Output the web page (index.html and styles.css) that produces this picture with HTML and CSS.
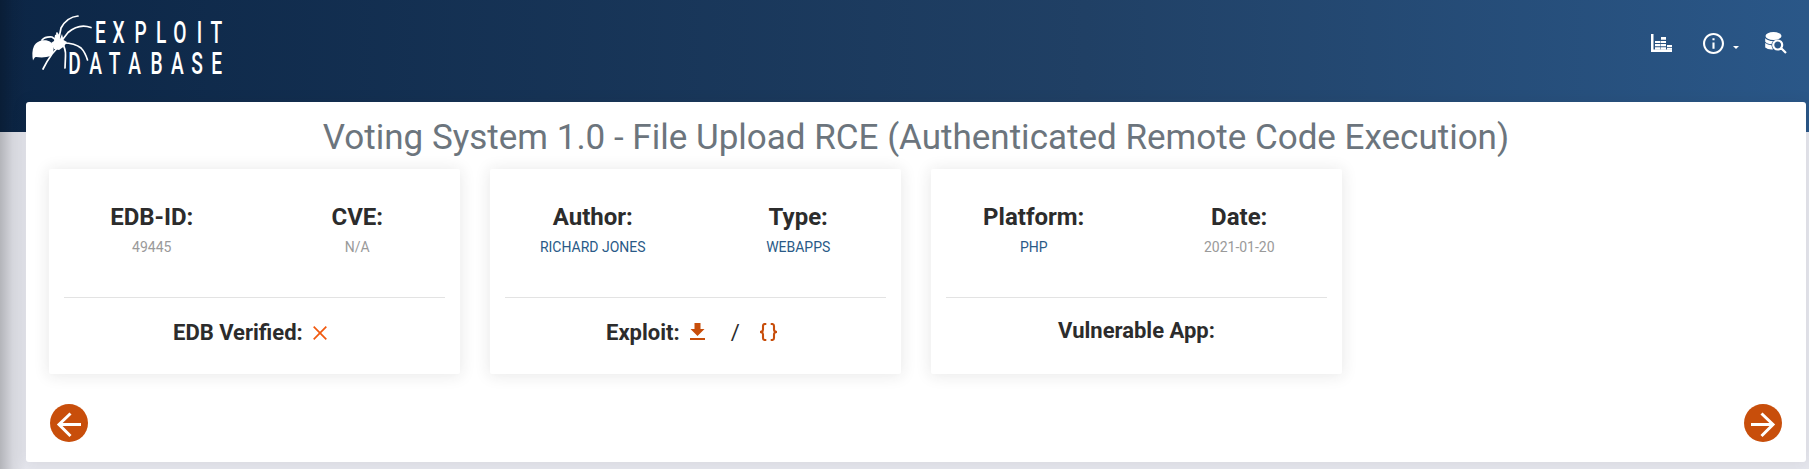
FILE: index.html
```html
<!DOCTYPE html>
<html lang="en">
<head>
<meta charset="utf-8">
<title>Voting System 1.0 - File Upload RCE</title>
<link rel="stylesheet" href="styles.css">
</head>
<body>
<header class="topbar">
  <svg class="logo" width="204" height="72" viewBox="30 14 204 72" role="img" aria-label="Exploit Database">
    <g class="spider-body">
      <path d="M33 60.500C32 56 32 50 34 46C37 40 46 38.500 50.500 42C54.500 46 54.500 52 51 55.500C46 58 40 57.500 36 57C34.500 57 34 59 33 60.500Z"/>
      <path d="M51 43L54 41L55 35L58.500 33.500L60 39L62 34L63.500 40L67 42L64 46.500L59 50L54 49Z"/>
    </g>
    <g class="spider-legs">
      <path d="M59 38L61 28Q67 17 78 16"/>
      <path d="M63 39L68 32.500Q79 23 91 27.500"/>
      <path d="M63 43Q75 43 81 48Q85 52 87.500 60"/>
      <path d="M62 43Q66 49 65.500 56L65 68"/>
      <path d="M60 45L52 54Q47 61 43 69"/>
      <path d="M42 40Q45 36.500 52 37L59 42"/>
      <path d="M57 33L59 43"/>
    </g>
    <g class="logo-text" transform="scale(.6 1)">
      <text y="43" x="167.500 197.800 234.200 268.800 299.600 332.500 360.500">EXPLOIT</text>
      <text y="74" x="124 159.500 191.200 224.500 261 295.800 328.500 361">DATABASE</text>
    </g>
  </svg>
  <nav class="actions">
    <svg class="icon-stats" width="22" height="20" viewBox="0 0 22 20">
      <path d="M0 1h2.500v15.500h18.500V19H0z"/>
      <path d="M4 8h5.500v2H4zM10 4h5v2.800h-5zM4 11h5.500v2.200H4zM10 8h5v2h-5zM10 11h5v2.200h-5zM16 12h5v2h-5zM4 14.200h5.500v2.500H4zM10 14.200h5v2.500h-5zM16 14.800h5v2h-5z"/>
    </svg>
    <svg class="icon-info" width="21" height="21" viewBox="2 2 20 20">
      <path d="M11 7h2v2h-2zm0 4h2v6h-2zm1-9C6.480 2 2 6.480 2 12s4.480 10 10 10 10-4.480 10-10S17.520 2 12 2zm0 18c-4.410 0-8-3.590-8-8s3.590-8 8-8 8 3.590 8 8-3.590 8-8 8z"/>
    </svg>
    <span class="caret"></span>
    <svg class="icon-search" width="22" height="22" viewBox="0 0 22 22">
      <ellipse cx="8.500" cy="4" rx="8" ry="4"/>
      <path d="M.2 6.200Q3 9 8 9Q6.700 10.500 6.500 12.200Q2 12 .2 9.700zM.2 11Q2.500 13 6.500 13.300Q6.700 15 8 17.500Q3 18 .2 15.500z"/>
      <path class="lens" d="M12.700 8.500a4.500 4.500 0 1 0 0 9a4.500 4.500 0 1 0 0-9zM16 16l5 5"/>
    </svg>
  </nav>
</header>
<main class="panel">
  <h1 class="title">Voting System 1.0 - File Upload RCE (Authenticated Remote Code Execution)</h1>
  <div class="cards">
    <section class="card">
      <div class="stats">
        <div class="stat"><h4>EDB-ID:</h4><p>49445</p></div>
        <div class="stat"><h4>CVE:</h4><p>N/A</p></div>
      </div>
      <div class="foot verified">
        <strong>EDB Verified:</strong>
        <svg class="cross" width="14" height="14" viewBox="0 0 14 14"><path d="M.7.7l12.600 12.600M13.300.7L.7 13.300"/></svg>
      </div>
    </section>
    <section class="card">
      <div class="stats">
        <div class="stat"><h4>Author:</h4><p><a>RICHARD JONES</a></p></div>
        <div class="stat"><h4>Type:</h4><p><a>WEBAPPS</a></p></div>
      </div>
      <div class="foot exploit">
        <strong>Exploit:</strong>
        <svg class="download" width="15" height="17" viewBox="0 0 15 17"><path d="M4.500 0h6v6H14.500l-7 7-7-7H4.500zM0 15h15v2H0z"/></svg>
        <span class="slash">/</span>
        <svg class="braces" width="19" height="18" viewBox="0 0 19 18"><path d="M7.300 1H6Q4 1 4 3V6.500Q4 9 1 9Q4 9 4 11.500V15Q4 17 6 17H7.300M11.700 1H13Q15 1 15 3V6.500Q15 9 18 9Q15 9 15 11.500V15Q15 17 13 17H11.700"/></svg>
      </div>
    </section>
    <section class="card">
      <div class="stats">
        <div class="stat"><h4>Platform:</h4><p><a>PHP</a></p></div>
        <div class="stat"><h4>Date:</h4><p>2021-01-20</p></div>
      </div>
      <div class="foot app"><strong>Vulnerable App:</strong></div>
    </section>
  </div>
  <div class="pager">
    <svg width="38" height="38" viewBox="0 0 38 38"><circle cx="19" cy="19" r="19"/><path d="M31 20.500H9M20.500 9.500L9 20.500L20.500 32"/></svg>
    <svg width="38" height="38" viewBox="0 0 38 38"><circle cx="19" cy="19" r="19"/><path d="M7 20.500H29M17.500 9.500L29 20.500L17.500 32"/></svg>
  </div>
</main>
<div class="edge-shade"></div>
</body>
</html>
```
FILE: styles.css
```css
* { box-sizing: border-box; }
body {
  margin: 0;
  height: 469px;
  overflow: hidden;
  background: #e6e7ee;
  font-family: Roboto, sans-serif;
  color: #2c2c2c;
}
.topbar {
  height: 132px;
  display: flex;
  justify-content: space-between;
  align-items: flex-start;
  padding: 14px 22px 0 30px;
  background: linear-gradient(to right, #0c2646 0%, #204065 60%, #2a5788 100%);
}
.logo { display: block; overflow: visible; }
.spider-body { fill: #fff; }
.spider-legs { fill: none; stroke: #fff; stroke-width: 1.7; stroke-linecap: round; }
.logo-text { fill: #fff; font: 500 32px Roboto, sans-serif; text-anchor: middle; }
.actions { display: flex; align-items: flex-start; padding-top: 18px; fill: #fff; }
.icon-stats { margin: 1px 30px 0 0; }
.icon-info { margin-top: 1px; }
.caret {
  margin: 14px 26px 0 9px;
  border: 3px solid transparent;
  border-top-color: #fff;
  border-bottom: 0;
}
.lens { fill: none; stroke: #fff; stroke-width: 2.200; }
.panel {
  position: relative;
  z-index: 1;
  width: 1780px;
  height: 360px;
  margin: -30px 0 0 26px;
  padding: 15px 23px 0;
  background: #fff;
  border-radius: 3px;
  box-shadow: 0 1px 15px 1px rgba(39, 39, 39, .08);
}
.title {
  margin: 0;
  height: 52px;
  text-align: center;
  font-size: 35px;
  font-weight: 400;
  line-height: 42px;
  color: #6c757d;
  white-space: nowrap;
}
.cards { display: flex; gap: 30px; }
.card {
  width: 411px;
  height: 205px;
  background: #fff;
  border-radius: 2px;
  box-shadow: 0 1px 15px 1px rgba(39, 39, 39, .1);
}
.stats {
  display: grid;
  grid-template-columns: 1fr 1fr;
  height: 128px;
  padding-top: 32px;
  text-align: center;
}
.stat h4 { margin: 0; font-size: 24px; line-height: 32px; font-weight: 700; }
.stat p { margin: 4px 0 0; font-size: 14px; line-height: 20px; color: #9a9a9a; }
.stat a { color: #2a5a87; }
.foot {
  display: flex;
  align-items: center;
  height: 68px;
  margin: 0 15px;
  border-top: 1px solid #e3e3e3;
  font-size: 22px;
}
.foot strong { font-weight: 700; white-space: nowrap; }
.verified { padding: 2px 0 0 109px; }
.cross { margin: 0 0 0 10px; fill: none; stroke: #f1590e; stroke-width: 1.700; }
.exploit { padding: 2px 0 0 101px; }
.download { margin: -2px 25px 0 10px; fill: #c84e0b; }
.slash { width: 9px; margin-left: 1px; }
.braces { margin: -1px 0 0 19px; fill: none; stroke: #c84e0b; stroke-width: 2.100; }
.app { padding-bottom: 3px; justify-content: center; }
.pager { display: flex; justify-content: space-between; margin-top: 30px; padding: 0 1px; }
.pager circle { fill: #c84e0b; }
.pager path { fill: none; stroke: #fff; stroke-width: 3; }
.edge-shade {
  position: absolute;
  inset: 0 auto 0 0;
  width: 26px;
  background: linear-gradient(to right, rgba(0, 0, 0, .22), rgba(0, 0, 0, .07) 50%, transparent);
}
```
